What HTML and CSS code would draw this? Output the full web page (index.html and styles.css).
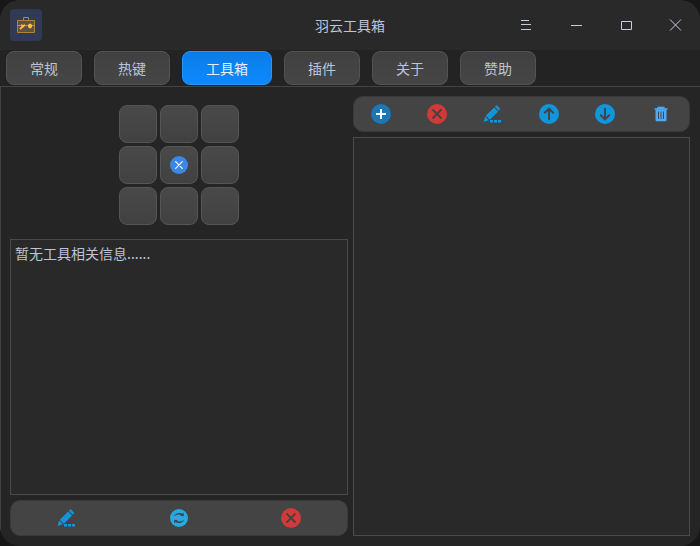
FILE: index.html
```html
<!DOCTYPE html>
<html lang="zh-CN">
<head>
<meta charset="utf-8">
<meta name="viewport" content="width=device-width, initial-scale=1">
<title>羽云工具箱</title>
<link rel="stylesheet" href="styles.css">
</head>
<body>
<svg class="defs" aria-hidden="true">
  <symbol id="edit" viewBox="0 0 20 20">
    <path fill="#1296db" d="M11.100 3.600 15.100 7.600 6.800 15.800 2.800 11.800ZM2.200 12.600 5.900 16.300 .5 18ZM12.800 1.800Q13.500 1 14.300 1.700L16.700 4.200Q17.500 5 16.700 5.800L15.900 6.800 11.800 2.800ZM7 16h3v2.500H7zM11 16h3v2.500h-3zM15 16h3v2.500h-3z"/>
  </symbol>
  <symbol id="remove" viewBox="0 0 20 20">
    <circle cx="10" cy="10" r="10" fill="#d03a38"/>
    <path d="M6 6 14 14M14 6 6 14" stroke="#4a4040" stroke-width="1.800" stroke-linecap="round"/>
  </symbol>
</svg>
<div class="window">
  <header class="titlebar">
    <span class="logo">
      <svg width="20" height="20" viewBox="0 0 20 20" fill="none">
        <path d="M7.500 5V2.500h5V5" stroke="#a98a48"/>
        <path d="M1.500 5.500h17v12h-17z" fill="#5b5444" stroke="#a98432"/>
        <path d="M1 10.500h18" stroke="#b8923e"/>
        <path d="M4 14 7 11.300" stroke="#ffc42e" stroke-width="1.800"/>
        <path d="M5.200 8.800 7 10.300l1.500-1.500L9 11 7.500 12.300 5.500 11.800Z" fill="#ffc42e"/>
        <path d="M12 9.500h4v3h-4zM13 8.800h2v4.400h-2z" fill="#ffc42e"/>
      </svg>
    </span>
    <h1>羽云工具箱</h1>
    <div class="controls">
      <button type="button" aria-label="菜单"><svg viewBox="0 0 14 12"><path d="M3 1.500h8M3 5.500h10M3 10.500h10"/></svg></button>
      <button type="button" aria-label="最小化"><svg viewBox="0 0 14 12"><path d="M3 6.500h11"/></svg></button>
      <button type="button" aria-label="最大化"><svg viewBox="0 0 14 12"><path d="M3.500 2.500h10v8h-10z"/></svg></button>
      <button type="button" aria-label="关闭"><svg viewBox="0 0 14 12"><path d="M2 .500 13 11.500M13 .500 2 11.500"/></svg></button>
    </div>
  </header>
  <nav class="tabs">
    <button type="button">常规</button>
    <button type="button">热键</button>
    <button type="button" class="active" aria-current="page">工具箱</button>
    <button type="button">插件</button>
    <button type="button">关于</button>
    <button type="button">赞助</button>
  </nav>
  <main class="content">
    <section class="column">
      <div class="pad">
        <button type="button" aria-label="工具 1"></button>
        <button type="button" aria-label="工具 2"></button>
        <button type="button" aria-label="工具 3"></button>
        <button type="button" aria-label="工具 4"></button>
        <button type="button" aria-label="关闭">
          <svg width="18" height="18" viewBox="0 0 18 18"><circle cx="9" cy="9" r="9" fill="#3b87e4"/><path d="M5.700 5.700 12.300 12.300M12.300 5.700 5.700 12.300" stroke="#fff" stroke-width="1.200" stroke-linecap="round"/></svg>
        </button>
        <button type="button" aria-label="工具 6"></button>
        <button type="button" aria-label="工具 7"></button>
        <button type="button" aria-label="工具 8"></button>
        <button type="button" aria-label="工具 9"></button>
      </div>
      <textarea class="box info" aria-label="工具信息" readonly>暂无工具相关信息......</textarea>
      <div class="toolbar">
        <button type="button" aria-label="编辑"><svg class="icon"><use href="#edit"/></svg></button>
        <button type="button" aria-label="刷新">
          <svg width="18" height="18" viewBox="0 0 18 18"><circle cx="9" cy="9" r="9" fill="#29a9e0"/><path fill="#444" d="M3.500 7.500Q5.500 3.800 9.500 3.900 11.500 4 12.800 5L13.800 3.200V7.200L9.800 6.800 11.300 5.900Q7 4.500 3.500 7.500ZM14.500 10.500Q12.500 14.200 8.500 14.100 6.500 14 5.200 13L4.200 14.800V10.800L8.200 11.200 6.700 12.100Q11 13.500 14.500 10.500Z"/></svg>
        </button>
        <button type="button" aria-label="移除"><svg class="icon"><use href="#remove"/></svg></button>
      </div>
    </section>
    <section class="column">
      <div class="toolbar">
        <button type="button" aria-label="添加"><svg class="icon" viewBox="0 0 20 20"><circle cx="10" cy="10" r="10" fill="#1d76b5"/><path d="M10 5v10M5 10h10" stroke="#fff" stroke-width="2"/></svg></button>
        <button type="button" aria-label="删除"><svg class="icon"><use href="#remove"/></svg></button>
        <button type="button" aria-label="编辑"><svg class="icon"><use href="#edit"/></svg></button>
        <button type="button" aria-label="上移"><svg class="icon" viewBox="0 0 20 20"><circle cx="10" cy="10" r="10" fill="#1296db"/><path d="M10 15.200V5M5.800 8.800 10 4.700 14.200 8.800" fill="none" stroke="#444" stroke-width="2" stroke-linecap="round"/></svg></button>
        <button type="button" aria-label="下移"><svg class="icon" viewBox="0 0 20 20"><circle cx="10" cy="10" r="10" fill="#1296db"/><path d="M10 4.800V15M5.800 11.200 10 15.300 14.200 11.200" fill="none" stroke="#444" stroke-width="2" stroke-linecap="round"/></svg></button>
        <button type="button" aria-label="清空"><svg width="14" height="16" viewBox="0 0 14 16"><path d="M4 2.500V1.500h6v1M.500 3h13" fill="none" stroke="#4eaaf5" stroke-width="1.300"/><path fill="#4eaaf5" d="M1.500 3.500h11v10.500Q12.500 15.300 11 15.300H3Q1.500 15.300 1.500 14Z"/><path d="M4.500 5.500v7.500M7 5.500v7.500M9.500 5.500v7.500" stroke="#444"/></svg></button>
      </div>
      <ul class="box list" aria-label="工具列表"></ul>
    </section>
  </main>
</div>
</body>
</html>
```

FILE: styles.css
```css
* {
  box-sizing: border-box;
}

body {
  margin: 0;
  background: #171717;
  color: #bdc4d8;
  font: 14px/20px "Noto Sans CJK SC", sans-serif;
}

button {
  display: flex;
  align-items: center;
  justify-content: center;
  padding: 0;
  border: 0;
  background: none;
  color: inherit;
  font: inherit;
}

.defs {
  display: none;
}

.window {
  display: flex;
  flex-direction: column;
  min-height: 100vh;
  overflow: hidden;
  border-radius: 20px;
  background: #252525;
}

.titlebar {
  display: grid;
  grid-template-columns: 1fr auto 1fr;
  align-items: center;
  height: 50px;
  background: #292929;
}

.titlebar h1 {
  margin: 0;
  font-size: 14px;
  font-weight: 400;
}

.logo {
  display: flex;
  align-items: center;
  justify-content: center;
  width: 32px;
  height: 32px;
  margin-left: 10px;
  border-radius: 4px;
  background: #303a54;
}

.controls {
  display: flex;
  justify-content: flex-end;
}

.controls button {
  width: 50px;
  height: 50px;
}

.controls svg {
  width: 14px;
  height: 12px;
  fill: none;
  stroke: #c6cce0;
}

.tabs {
  display: flex;
  gap: 12px;
  padding: 1px 6px;
  border-bottom: 1px solid #434343;
  background: #232323;
}

.tabs button {
  height: 34px;
  padding: 0 23px;
  border: 1px solid #535353;
  border-radius: 8px;
  background: linear-gradient(#404040, #464646);
}

.tabs .active {
  border-color: #2b91f5;
  background: linear-gradient(#0b7ce8, #0d8aff);
  color: #e6eefa;
}

.content {
  flex: 1;
  display: grid;
  grid-template-columns: 1fr 1fr;
  gap: 5px;
  padding: 9px 10px 10px 9px;
  border-left: 1px solid #434343;
}

.column {
  display: flex;
  flex-direction: column;
  gap: 5px;
}

.pad {
  display: grid;
  grid-template-columns: repeat(3, 38px);
  grid-auto-rows: 38px;
  justify-content: center;
  gap: 3px;
  padding: 9px 0;
}

.pad button {
  border: 1px solid #555;
  border-radius: 8px;
  background: linear-gradient(#494949, #414141);
}

.box {
  flex: 1;
  width: 100%;
  margin: 0;
  border: 1px solid #4a4a4a;
  background: #292929;
}

.info {
  padding: 3px 4px;
  outline: none;
  color: inherit;
  font: inherit;
  resize: none;
}

.list {
  padding: 0;
  list-style: none;
}

.toolbar {
  display: flex;
  height: 36px;
  border: 1px solid #3a3a3a;
  border-radius: 10px;
  background: #444;
}

.toolbar button {
  flex: 1;
}

.icon {
  width: 20px;
  height: 20px;
}
```
